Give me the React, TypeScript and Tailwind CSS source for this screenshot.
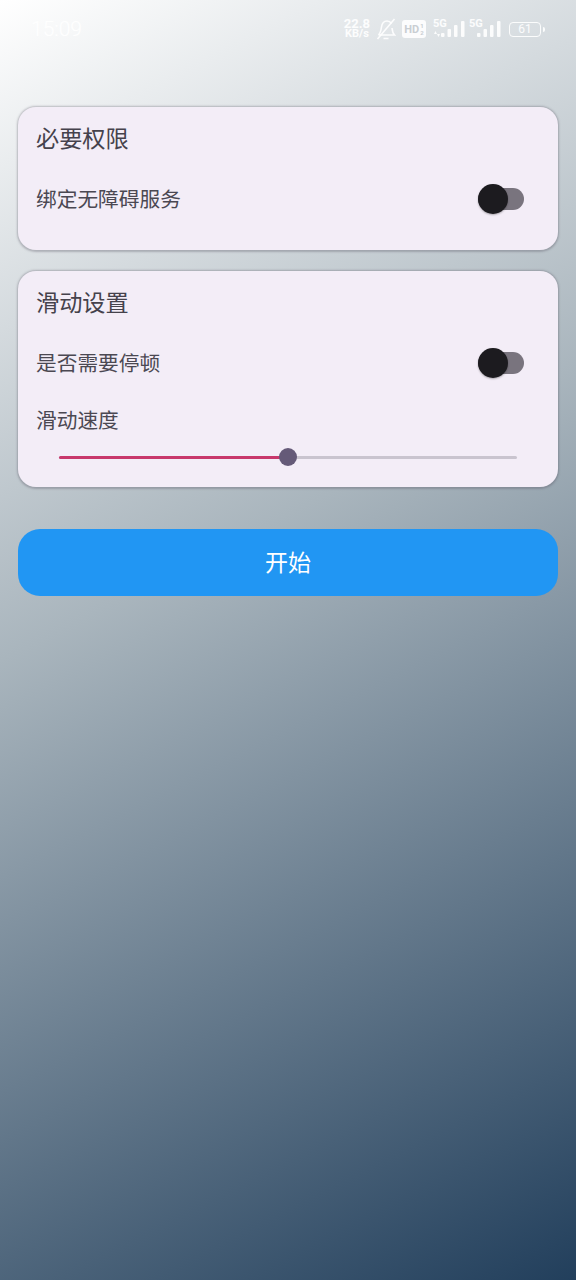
import { useState } from 'react';

function Signal() {
  return (
    <svg className="absolute bottom-0 right-0" width="24" height="16" viewBox="0 0 24 16" fill="currentColor">
      <rect x="0" y="12" width="3.500" height="4" rx="1" />
      <rect x="6.500" y="8" width="3.500" height="8" rx="1" />
      <rect x="13" y="4" width="3.500" height="12" rx="1" />
      <rect x="20" y="0" width="3.500" height="16" rx="1" />
    </svg>
  );
}

function StatusBar() {
  return (
    <div className="flex h-[58px] items-start justify-between pl-[31px] pr-[31px] pt-[18px] font-['Roboto']">
      <span className="text-[21px] leading-[22px] font-light text-white/90">15:09</span>
      <div className="flex h-[22px] items-center text-white/90">
        <div className="flex flex-col items-center font-bold">
          <span className="text-[13px] leading-[10px]">22.8</span>
          <span className="text-[11px] leading-[10px]">KB/s</span>
        </div>
        <svg className="ml-[6px]" width="20" height="22" viewBox="0 0 20 22" fill="none" stroke="currentColor" strokeWidth="1.600">
          <path d="M2.500 17c2-2 2.500-4.500 3-8 .5-3.500 2.500-6 5.500-6 2 0 3.500 1 4.500 2.500M16 10c.3 3 1 5.500 2.500 7H2.500" />
          <path d="M7.500 20.500h5M1.500 21 18.500 1" />
        </svg>
        <div className="ml-[6px] flex h-[18px] w-[24px] items-center justify-center gap-[1px] rounded-[3px] bg-white/90 font-bold text-[#c9ced3]">
          <span className="text-[11px] leading-none">HD</span>
          <span className="flex flex-col text-[6px] leading-[7px]">
            <span>1</span>
            <span>2</span>
          </span>
        </div>
        <div className="relative ml-[7px] h-[16px] w-[32px]">
          <span className="absolute left-0 top-[-2px] text-[11px] leading-[10px] font-bold">5G</span>
          <svg className="absolute bottom-0 left-[1px]" width="6" height="6" viewBox="0 0 6 6" fill="currentColor">
            <path d="M1.500 0 3 3H0zM4.500 6 3 3h3z" />
          </svg>
          <Signal />
        </div>
        <div className="relative ml-[4px] h-[16px] w-[32px]">
          <span className="absolute left-0 top-[-2px] text-[11px] leading-[10px] font-bold">5G</span>
          <Signal />
        </div>
        <div className="ml-[8px] flex items-center">
          <div className="flex h-[15px] w-[32px] items-center justify-center rounded-[4px] border border-white/90 text-[12px] leading-none">
            61
          </div>
          <div className="ml-[2px] h-[5px] w-[2px] rounded-r-sm bg-white/90" />
        </div>
      </div>
    </div>
  );
}

function Toggle({ checked, onClick }: { checked: boolean; onClick: () => void }) {
  return (
    <button onClick={onClick} className="relative h-[22px] w-[46px] rounded-full bg-[#79747e]">
      <span
        className={`absolute top-[-4px] h-[30px] w-[30px] rounded-full bg-[#1c1b1f] shadow-[0_1px_2px_rgba(0,0,0,0.3)] ${
          checked ? 'right-[-1px]' : 'left-0'
        }`}
      />
    </button>
  );
}

function Card({ children, className }: { children: React.ReactNode; className: string }) {
  return (
    <div
      className={`rounded-[18px] bg-[#f3edf7] pl-[18px] pr-[34px] pt-[16px] shadow-[0_0.5px_2px_1px_rgba(90,85,100,0.35)] ${className}`}
    >
      {children}
    </div>
  );
}

export default function App() {
  const [bound, setBound] = useState(false);
  const [pause, setPause] = useState(false);

  return (
    <div
      className="h-[1280px] w-[576px] overflow-hidden bg-[linear-gradient(153deg,#ffffff_0%,#a9b5bd_42%,#223f5c_100%)]"
      style={{ fontFamily: '"Noto Sans CJK SC", "Noto Sans", sans-serif' }}
    >
      <StatusBar />

      <div className="mt-[49px] flex flex-col px-[18px]">
        {/* 必要权限 */}
        <Card className="h-[143px]">
          <h2 className="text-[23.200px] leading-[28px] text-[#45424c]">必要权限</h2>
          <div className="mt-[33px] flex h-[30px] items-center justify-between">
            <span className="pb-[2px] text-[20.700px] leading-[28px] text-[#4b4852]">绑定无障碍服务</span>
            <Toggle checked={bound} onClick={() => setBound(!bound)} />
          </div>
        </Card>

        {/* 滑动设置 */}
        <Card className="mt-[21px] h-[216px]">
          <h2 className="text-[23.200px] leading-[28px] text-[#45424c]">滑动设置</h2>
          <div className="mt-[33px] flex h-[30px] items-center justify-between">
            <span className="pb-[2px] text-[20.700px] leading-[28px] text-[#4b4852]">是否需要停顿</span>
            <Toggle checked={pause} onClick={() => setPause(!pause)} />
          </div>
          <div className="mt-[26px] text-[20.700px] leading-[30px] text-[#4b4852]">滑动速度</div>
          <div className="relative ml-[23px] mr-[7px] mt-[22px] h-[3px] rounded-full bg-[#c9c4cf]">
            <div className="h-full w-1/2 rounded-l-full bg-[#c8386c]" />
            <div className="absolute left-1/2 top-[-8px] h-[18px] w-[18px] -translate-x-1/2 rounded-full bg-[#655a78]" />
          </div>
        </Card>

        <button className="mt-[42px] h-[67px] rounded-[22px] bg-[#2196f3] pb-[2px] text-[23px] text-white">开始</button>
      </div>
    </div>
  );
}
